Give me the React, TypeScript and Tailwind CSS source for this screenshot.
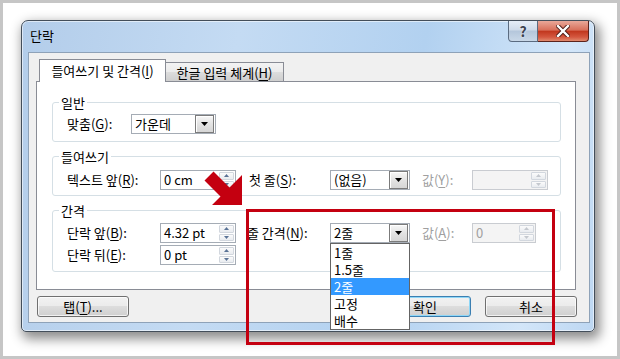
import React from "react";

function Mn({ c }: { c: string }) {
  return <span className="underline underline-offset-[2px]">{c}</span>;
}

function DownTri({ color = "#000" }: { color?: string }) {
  return (
    <svg width="7" height="4" viewBox="0 0 7 4">
      <polygon points="0,0 7,0 3.5,4" fill={color} />
    </svg>
  );
}

function Combo({ value, w }: { value: string; w: string }) {
  return (
    <div className={`flex h-[20px] ${w} items-center border border-[#a5acb5] bg-white`}>
      <span className="flex-1 pl-[3px] leading-[18px]">{value}</span>
      <div className="mr-px flex h-[18px] w-[19px] items-center justify-center border border-[#7b7b7b] bg-[linear-gradient(#f7f7f7,#e3e3e3_50%,#d6d6d6)] shadow-[inset_1px_1px_0_#fff]">
        <DownTri />
      </div>
    </div>
  );
}

function Spin({ value, w, disabled }: { value: string; w: string; disabled?: boolean }) {
  const arrow = disabled ? "#c4c8ce" : "#5a7396";
  return (
    <div
      className={`flex h-[20px] ${w} border ${
        disabled ? "border-[#c9ccd1] bg-[#f4f4f4] text-[#a0a0a0]" : "border-[#a5acb5] bg-white"
      }`}
    >
      <span className="flex-1 pl-[3px] leading-[18px]">{value}</span>
      <div className="my-px mr-px flex w-[15px] flex-col gap-px">
        <div className="flex flex-1 items-center justify-center rounded-[1px] border border-[#d2d7de] bg-[linear-gradient(#fbfbfb,#e9ecf0)]">
          <svg width="5" height="3" viewBox="0 0 5 3">
            <polygon points="0,3 5,3 2.5,0" fill={arrow} />
          </svg>
        </div>
        <div className="flex flex-1 items-center justify-center rounded-[1px] border border-[#d2d7de] bg-[linear-gradient(#fbfbfb,#e9ecf0)]">
          <svg width="5" height="3" viewBox="0 0 5 3">
            <polygon points="0,0 5,0 2.5,3" fill={arrow} />
          </svg>
        </div>
      </div>
    </div>
  );
}

function Button({ children, focused, className = "" }: { children: React.ReactNode; focused?: boolean; className?: string }) {
  return (
    <div
      className={`flex h-[21px] w-[92px] items-center justify-center rounded-[3px] border bg-[linear-gradient(#f2f2f2_0%,#ebebeb_50%,#dddddd_50%,#cfcfcf_100%)] leading-none ${
        focused
          ? "border-[#3c7fb1] shadow-[inset_0_0_0_1px_#8fd7f7]"
          : "border-[#707070] shadow-[inset_0_0_0_1px_rgba(255,255,255,0.7)]"
      } ${className}`}
    >
      {children}
    </div>
  );
}

const lineItems = ["1줄", "1.5줄", "2줄", "고정", "배수"];

export default function App() {
  return (
    <div className="relative h-[359px] w-[620px] border-[3px] border-[#c6c6c6] bg-white pl-[18px] pt-[17px] font-['Noto_Sans_CJK_KR','Noto_Sans',sans-serif] text-[13px] text-black">
      {/* Dialog window */}
      <div className="flex h-[312px] w-[574px] flex-col rounded-t-[7px] rounded-b-[5px] border border-[#434e5a] bg-[linear-gradient(100deg,#b3cdea_0%,#c4dbf3_35%,#b2d1f0_65%,#d3e6f9_88%,#bdd7f2_100%)] pb-[7px] pl-[6px] pr-[4px] shadow-[inset_0_0_0_1px_rgba(255,255,255,0.55),3px_5px_12px_2px_rgba(0,0,0,0.45)]">
        {/* Title bar */}
        <div className="flex h-[31px] items-start">
          <span className="mt-[7px] pl-[2px] leading-[16px]">단락</span>
          <div className="ml-auto mr-px flex h-[21px]">
            <div className="flex w-[30px] items-center justify-center rounded-bl-[4px] border border-t-0 border-[#5b6b80] bg-[linear-gradient(#e6eef7,#cfdbe9_45%,#b4c6db_50%,#c9d8e8)] text-[14px] font-bold leading-none text-[#3b4350] [text-shadow:0_0_2px_#fff]">
              ?
            </div>
            <div className="flex w-[51px] items-center justify-center rounded-br-[4px] border border-l-0 border-t-0 border-[#5c231c] bg-[linear-gradient(#e9a899,#d8705b_45%,#c2381f_52%,#d4573f_80%,#e08a6e)]">
              <svg width="14" height="12" viewBox="0 0 14 12">
                <path d="M2 1 L12 11 M12 1 L2 11" stroke="#4a1a14" strokeWidth="4.2" strokeLinecap="square" />
                <path d="M2 1 L12 11 M12 1 L2 11" stroke="#fff" strokeWidth="2.4" strokeLinecap="square" />
              </svg>
            </div>
          </div>
        </div>

        {/* Client area */}
        <div className="flex h-[271px] flex-col border border-[#8ea2b8] bg-[#f0f0f0] pl-[7px] pt-[6px]">
          {/* Tabs */}
          <div className="flex h-[22px] items-end pl-[3px]">
            <div className="relative z-10 -mb-px flex h-[23px] w-[127px] items-center justify-center border border-b-0 border-[#898c95] bg-white pb-[2px] leading-none">
              들여쓰기 및 간격(<Mn c="I" />)
            </div>
            <div className="flex h-[19px] w-[118px] items-center justify-center border border-b-0 border-l-0 border-[#898c95] bg-[linear-gradient(#f3f3f3,#ebebeb_50%,#dddddd_50%,#cfcfcf)] leading-none">
              한글 입력 체계(<Mn c="H" />)
            </div>
          </div>

          {/* Tab page */}
          <div className="flex h-[209px] w-[540px] flex-col gap-[7px] border border-[#898c95] bg-white pl-[15px] pt-[13px]">
            <fieldset className="h-[47px] w-[509px] rounded-[3px] border border-[#d5dfe5] pl-[14px] pt-[4px]">
              <legend className="-ml-[8px] px-[2px] leading-[15px]">일반</legend>
              <div className="flex h-[20px] items-center">
                <span className="w-[64px]">
                  맞춤(<Mn c="G" />):
                </span>
                <Combo value="가운데" w="w-[85px]" />
              </div>
            </fieldset>

            <fieldset className="h-[47px] w-[509px] rounded-[3px] border border-[#d5dfe5] pl-[14px] pt-[6px]">
              <legend className="-ml-[8px] px-[2px] leading-[15px]">들여쓰기</legend>
              <div className="flex h-[20px] items-center">
                <span className="w-[93px]">
                  텍스트 앞(<Mn c="R" />):
                </span>
                <Spin value="0 cm" w="w-[76px]" />
                <span className="ml-[13px] w-[81px]">
                  첫 줄(<Mn c="S" />):
                </span>
                <Combo value="(없음)" w="w-[80px]" />
                <span className="ml-[12px] w-[50px] text-[#a0a0a0]">
                  값(<Mn c="Y" />):
                </span>
                <Spin value="" w="w-[76px]" disabled />
              </div>
            </fieldset>

            <fieldset className="h-[69px] w-[509px] rounded-[3px] border border-[#d5dfe5] pl-[14px] pt-[5px]">
              <legend className="-ml-[8px] px-[2px] leading-[15px]">간격</legend>
              <div className="flex flex-col gap-[2px]">
                <div className="flex h-[20px] items-center">
                  <span className="w-[93px]">
                    단락 앞(<Mn c="B" />):
                  </span>
                  <Spin value="4.32 pt" w="w-[76px]" />
                  <span className="ml-[11px] w-[83px]">
                    줄 간격(<Mn c="N" />):
                  </span>
                  <div className="relative">
                    <Combo value="2줄" w="w-[80px]" />
                    {/* Open dropdown list */}
                    <div className="absolute left-0 top-full z-10 w-[80px] border border-[#646464] bg-white">
                      {lineItems.map((item) => (
                        <div
                          key={item}
                          className={`h-[17px] pl-[3px] leading-[17px] ${
                            item === "2줄" ? "bg-[#3399ff] text-white" : ""
                          }`}
                        >
                          {item}
                        </div>
                      ))}
                    </div>
                  </div>
                  <span className="ml-[12px] w-[50px] text-[#a0a0a0]">
                    값(<Mn c="A" />):
                  </span>
                  <Spin value="0" w="w-[64px]" disabled />
                </div>
                <div className="flex h-[20px] items-center">
                  <span className="w-[93px]">
                    단락 뒤(<Mn c="E" />):
                  </span>
                  <Spin value="0 pt" w="w-[76px]" />
                </div>
              </div>
            </fieldset>
          </div>

          {/* Buttons */}
          <div className="mt-[6px] flex w-[541px]">
            <Button className="ml-px">
              탭(<Mn c="T" />)...
            </Button>
            <Button focused className="ml-auto">
              확인
            </Button>
            <Button className="ml-[14px]">취소</Button>
          </div>
        </div>
      </div>

      {/* Red annotation arrow */}
      <svg className="absolute left-[197px] top-[163px] z-20" width="46" height="44" viewBox="0 0 46 44">
        <polygon
          points="4.5,14.5 13.5,5.5 29.5,21.5 42,9 42,39 12,39 20.5,30.5"
          fill="#c40010"
        />
      </svg>

      {/* Red annotation box */}
      <div className="absolute left-[243px] top-[206px] z-20 h-[136px] w-[309px] border-[3px] border-[#c40010]" />
    </div>
  );
}
